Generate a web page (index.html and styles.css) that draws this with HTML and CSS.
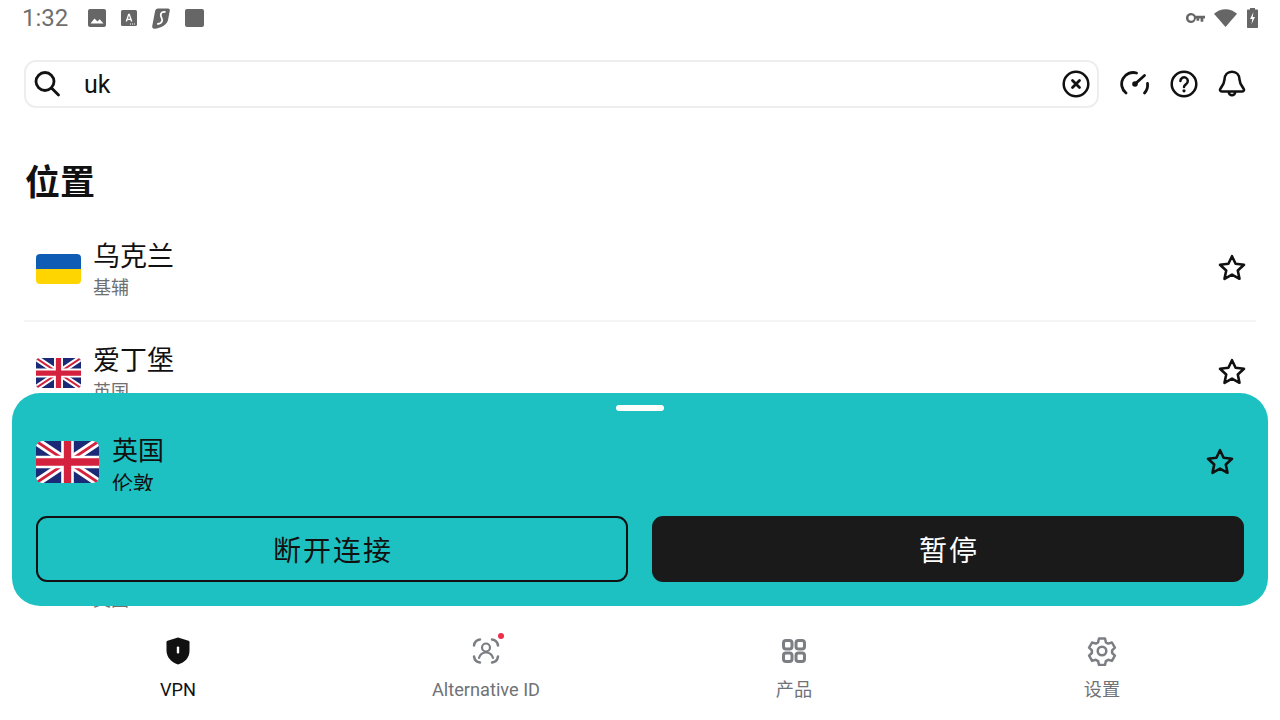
FILE: index.html
```html
<!DOCTYPE html>
<html lang="zh-CN">
<head>
    <meta charset="UTF-8">
    <meta name="viewport" content="width=device-width, initial-scale=1.0">
    <title>VPN</title>
    <link rel="stylesheet" href="styles.css">
</head>
<body>
    <!-- shared icons -->
    <svg class="defs" aria-hidden="true">
        <symbol id="star" viewBox="0 0 30 30">
            <path d="M15 3.200l3.600 7.600 8.400 1-6.200 5.700 1.700 8.300-7.500-4.200-7.500 4.200 1.700-8.300L3 11.800l8.400-1z" fill="none" stroke="currentColor" stroke-width="2.600" stroke-linejoin="round"/>
        </symbol>
        <symbol id="uk" viewBox="0 0 60 40" preserveAspectRatio="none">
            <rect width="60" height="40" fill="#1a2a76"/>
            <path d="M0 0L60 40M60 0L0 40" stroke="#fff" stroke-width="8"/>
            <path d="M0 0L60 40M60 0L0 40" stroke="#d4213d" stroke-width="2.600"/>
            <path d="M30 0V40M0 20H60" stroke="#fff" stroke-width="12"/>
            <path d="M30 0V40M0 20H60" stroke="#d4213d" stroke-width="7"/>
        </symbol>
    </svg>

    <div class="screen">
        <div class="status-bar">
            <span class="time">1:32</span>
            <div class="status-icons">
                <svg width="18" height="18" viewBox="0 0 18 18"><rect width="18" height="18" rx="2" fill="#666"/><path d="M2.500 14.500l4-5 3 3 2.200-2.200 3.800 4.200z" fill="#fff"/></svg>
                <svg width="16" height="16" viewBox="0 0 16 16"><rect width="16" height="16" rx="1.500" fill="#666"/><path d="M4.600 11.500L7.200 3.800h1.600l2.600 7.700H9.900l-.5-1.600H6.600l-.5 1.600zM7 8.700h2L8 5.600z" fill="#fff"/><path d="M9 14h1M11 14h1M13 14h1" stroke="#fff"/></svg>
                <svg width="18" height="21" viewBox="0 0 18 21"><path d="M6 .5h10c1.500 0 2 1 1.800 2L16 12c-1 5-7 8-13.500 8.800-1.500.2-2.500-1-2.300-2.500L3 3.500C3.300 1.700 4.500.5 6 .5z" fill="#666"/><path d="M13.500 4C10 3.500 8.500 5 8.800 7.500s2 3.500 1.300 5.500-2.500 3-5 2.800" fill="none" stroke="#fff" stroke-width="1.800"/></svg>
                <span class="st-square"></span>
            </div>
            <div class="status-right">
                <svg class="st-key" width="19" height="12" viewBox="0 0 19 12"><path d="M5.200 1a5 5 0 0 1 4.500 2.800h9.300v2.800h-1.700v3.200h-2.700V6.600h-1.400v2.200H10.500V6.600H9.900A5 5 0 1 1 5.200 1zm0 2.300a2.700 2.700 0 1 0 0 5.400 2.700 2.700 0 0 0 0-5.400z" fill="#666"/></svg>
                <svg width="23" height="18" viewBox="0 0 23 18"><path d="M0 4.800C3 2 7 .2 11.500.2S20 2 23 4.800L11.500 18z" fill="#666"/></svg>
                <svg width="11" height="20" viewBox="0 0 11 20"><path d="M3 0h5v1.500h2c.6 0 1 .4 1 1V19c0 .6-.4 1-1 1H1c-.6 0-1-.4-1-1V2.500c0-.6.4-1 1-1h2z" fill="#666"/><path d="M6.500 4L3 11h2.300l-.8 5L8 9H5.700z" fill="#fff"/></svg>
            </div>
        </div>

        <div class="search-row">
            <div class="search-box">
                <svg width="30" height="30" viewBox="0 0 30 30" fill="none" stroke="#111" stroke-width="2.800" stroke-linecap="round"><circle cx="13" cy="12.500" r="9"/><path d="M20 19.500l6.500 6.500"/></svg>
                <span class="search-text">uk</span>
                <svg class="search-clear" width="28" height="28" viewBox="0 0 28 28" fill="none" stroke="#111" stroke-width="2.500" stroke-linecap="round"><circle cx="14" cy="14" r="12.300"/><path d="M10.500 10.500l7 7M17.500 10.500l-7 7" stroke-width="2.800"/></svg>
            </div>
            <div class="search-actions">
                <svg width="30" height="30" viewBox="0 0 30 30" fill="none" stroke="#111" stroke-width="2.800" stroke-linecap="round"><path d="M6 24A11.500 11.500 0 0 1 16.500 4"/><path d="M27.500 14.500a11.500 11.500 0 0 1-3 9.500"/><path d="M15 15L24.500 6.500"/><circle cx="15" cy="15" r="2.800" fill="#111" stroke="none"/></svg>
                <svg width="28" height="28" viewBox="0 0 28 28" fill="none" stroke="#111" stroke-width="2.500" stroke-linecap="round"><circle cx="14" cy="14" r="12.300"/><path d="M10.400 11a3.700 3.700 0 1 1 5.700 3.100c-1.300.9-2.100 1.600-2.100 3"/><circle cx="14" cy="20.800" r="1.600" fill="#111" stroke="none"/></svg>
                <svg width="28" height="28" viewBox="0 0 28 28" fill="none" stroke="#111" stroke-width="2.600" stroke-linejoin="round"><path d="M14 1.800c-4.500 0-7.300 3.300-7.500 7.700-.2 4.500-2 6.500-4 9-1 1.300-.4 3 1.300 3h20.400c1.700 0 2.300-1.700 1.300-3-2-2.500-3.800-4.500-4-9-.2-4.400-3-7.700-7.500-7.700z"/><path d="M10.800 22a3.200 3.200 0 0 0 6.400 0"/></svg>
            </div>
        </div>

        <h1 class="section-title">位置</h1>

        <div class="location-list">
            <div class="location">
                <svg class="flag" viewBox="0 0 45 30"><rect width="45" height="15" fill="#0f5cb5"/><rect y="15" width="45" height="15" fill="#fed500"/></svg>
                <div class="location-info">
                    <div class="location-name">乌克兰</div>
                    <div class="location-sub">基辅</div>
                </div>
                <svg class="star"><use href="#star"/></svg>
            </div>
            <div class="location">
                <svg class="flag"><use href="#uk"/></svg>
                <div class="location-info">
                    <div class="location-name">爱丁堡</div>
                    <div class="location-sub">英国</div>
                </div>
                <svg class="star"><use href="#star"/></svg>
            </div>
            <div class="location">
                <svg class="flag"><use href="#uk"/></svg>
                <div class="location-info">
                    <div class="location-name">格拉斯哥</div>
                    <div class="location-sub">英国</div>
                </div>
                <svg class="star"><use href="#star"/></svg>
            </div>
            <div class="location">
                <svg class="flag"><use href="#uk"/></svg>
                <div class="location-info">
                    <div class="location-name">伦敦</div>
                    <div class="location-sub">英国</div>
                </div>
                <svg class="star"><use href="#star"/></svg>
            </div>
        </div>

        <nav class="bottom-nav">
            <div class="nav-item active">
                <svg width="28" height="30" viewBox="0 0 28 30"><path d="M14 1.500l10.500 3.300c.6.200 1 .7 1 1.400v8.800c0 6.500-4.500 11.500-11.500 13.500C7 26 2.500 21 2.500 14.500V6.200c0-.7.400-1.200 1-1.400z" fill="#111"/><rect x="12.800" y="10.500" width="2.400" height="7" rx="1" fill="#fff"/></svg>
                <span class="nav-label">VPN</span>
            </div>
            <div class="nav-item">
                <span class="nav-icon">
                    <svg width="30" height="30" viewBox="0 0 30 30" fill="none" stroke="#7b7f84" stroke-width="2.500" stroke-linecap="round"><path d="M9 3.500C5.500 4 3.500 6 3 9.500M21 3.500c3.500.5 5.500 2.500 6 6M3 20.500c.5 3.500 2.500 5.500 6 6M27 20.500c-.5 3.500-2.500 5.500-6 6"/><circle cx="15" cy="11.500" r="4" stroke-width="2.200"/><path d="M8 22c1-3.500 3.500-5.500 7-5.500s6 2 7 5.500" stroke-width="2.200"/></svg>
                    <span class="nav-dot"></span>
                </span>
                <span class="nav-label">Alternative ID</span>
            </div>
            <div class="nav-item">
                <svg width="30" height="30" viewBox="0 0 30 30" fill="none" stroke="#7b7f84" stroke-width="3"><rect x="4.500" y="4.500" width="8.500" height="8.500" rx="2.500"/><rect x="17" y="4.500" width="8.500" height="8.500" rx="2.500"/><rect x="4.500" y="17" width="8.500" height="8.500" rx="2.500"/><rect x="17" y="17" width="8.500" height="8.500" rx="2.500"/></svg>
                <span class="nav-label">产品</span>
            </div>
            <div class="nav-item">
                <svg width="30" height="30" viewBox="0 0 30 30" fill="none" stroke="#7b7f84" stroke-width="2.500" stroke-linejoin="round"><path d="M12 2.500h6l.9 3.800 2.300 1.300 3.700-1.100 3 5.200-2.800 2.700v2.600l2.800 2.700-3 5.200-3.700-1.100-2.300 1.300-.9 3.800h-6l-.9-3.800-2.300-1.300-3.700 1.100-3-5.200 2.800-2.700v-2.600L2.100 11.700l3-5.200 3.700 1.100 2.300-1.300z"/><circle cx="15" cy="15" r="4.300"/></svg>
                <span class="nav-label">设置</span>
            </div>
        </nav>

        <!-- connected sheet sits over the list -->
        <div class="sheet">
            <div class="sheet-handle"></div>
            <div class="sheet-head">
                <svg class="sheet-flag"><use href="#uk"/></svg>
                <div class="sheet-info">
                    <div class="sheet-name">英国</div>
                    <div class="sheet-sub">伦敦</div>
                </div>
                <svg class="star"><use href="#star"/></svg>
            </div>
            <div class="sheet-buttons">
                <button class="btn btn-outline">断开连接</button>
                <button class="btn btn-dark">暂停</button>
            </div>
        </div>
    </div>
</body>
</html>
```

FILE: styles.css
```css
body {
    margin: 0;
    background-color: #fff;
    color: #111;
    font-family: Roboto, "Noto Sans CJK SC", sans-serif;
}

.defs {
    display: none;
}

.screen {
    position: relative;
    display: flex;
    flex-direction: column;
    width: 1280px;
    height: 720px;
    overflow: hidden;
    background-color: #fff;
}

/* status bar */
.status-bar {
    display: flex;
    align-items: center;
    flex-shrink: 0;
    height: 36px;
    padding: 0 22px;
}

.time {
    width: 66px;
    font-size: 24px;
    color: #6f6f6f;
}

.status-icons {
    display: flex;
    align-items: center;
    gap: 15px;
}

.st-square {
    width: 19px;
    height: 18px;
    border-radius: 2px;
    background-color: #666;
}

.status-right {
    display: flex;
    align-items: center;
    gap: 10px;
    margin-left: auto;
}

.st-key {
    margin-right: -1px;
}

/* search */
.search-row {
    display: flex;
    align-items: center;
    flex-shrink: 0;
    height: 48px;
    margin-top: 24px;
    padding: 0 34px 0 24px;
}

.search-box {
    display: flex;
    align-items: center;
    box-sizing: border-box;
    width: 1076px;
    height: 48px;
    padding: 0 7px 0 6px;
    border: 2px solid #eeeeee;
    border-radius: 12px;
}

.search-text {
    margin-left: 22px;
    font-size: 25px;
}

.search-clear {
    margin-left: auto;
}

.search-actions {
    display: flex;
    align-items: center;
    gap: 20px;
    margin-left: 21px;
}

.section-title {
    flex-shrink: 0;
    margin: 52px 0 0 25px;
    font-size: 35px;
    line-height: 48px;
    font-weight: 700;
}

/* locations */
.location-list {
    flex: 1;
    min-height: 0;
    margin-top: 10px;
    padding: 0 24px;
    overflow: hidden;
}

.location {
    display: flex;
    align-items: center;
    box-sizing: border-box;
    height: 104px;
    padding: 0 9px 0 12px;
    border-bottom: 2px solid #f4f4f4;
}

.flag {
    flex-shrink: 0;
    width: 45px;
    height: 30px;
    border-radius: 4px;
}

.location-info {
    flex: 1;
    margin-left: 12px;
}

.location-name {
    font-size: 27px;
    line-height: 36px;
}

.location-sub {
    margin-top: 1px;
    font-size: 18px;
    line-height: 24px;
    color: #6f6f6f;
}

.star {
    flex-shrink: 0;
    width: 30px;
    height: 30px;
}

.location .star {
    margin-bottom: 2px;
}

/* bottom nav */
.bottom-nav {
    display: grid;
    grid-template-columns: repeat(4, 1fr);
    flex-shrink: 0;
    height: 110px;
    padding: 0 24px;
    background-color: #fff;
}

.nav-item {
    display: flex;
    flex-direction: column;
    align-items: center;
    padding-top: 26px;
    font-size: 18.2px;
    line-height: 24px;
    color: #6f7276;
}

.nav-label {
    margin-top: 12px;
}

.nav-item.active {
    color: #111;
}

.nav-icon {
    position: relative;
    display: block;
    height: 30px;
}

.nav-dot {
    position: absolute;
    top: -3px;
    right: -3px;
    width: 6px;
    height: 6px;
    border-radius: 50%;
    background-color: #ec2f4b;
}

/* connected sheet */
.sheet {
    position: absolute;
    left: 12px;
    top: 393px;
    box-sizing: border-box;
    width: 1256px;
    height: 213px;
    padding: 12px 24px 0;
    border-radius: 28px;
    background-color: #1ec1c1;
}

.sheet-handle {
    width: 48px;
    height: 6px;
    margin: 0 auto;
    border-radius: 3px;
    background-color: #fff;
}

.sheet-head {
    display: flex;
    align-items: center;
    height: 71px;
    margin-top: 15px;
    padding-right: 9px;
}

.sheet-flag {
    flex-shrink: 0;
    width: 63px;
    height: 42px;
    border-radius: 6px;
}

.sheet-info {
    flex: 1;
    margin-top: 4px;
    margin-left: 13px;
}

.sheet-name {
    font-size: 26px;
    line-height: 36px;
}

/* the name below the title is cut off by its box */
.sheet-sub {
    height: 22px;
    margin-bottom: 3px;
    overflow: hidden;
    font-size: 21px;
    line-height: 31px;
}

.sheet-buttons {
    display: flex;
    gap: 24px;
    margin-top: 19px;
}

.btn {
    flex: 1;
    height: 66px;
    padding: 0 0 0 2px;
    border: 2px solid #111;
    border-radius: 11px;
    font-family: inherit;
    font-size: 28px;
    letter-spacing: 2px;
}

.btn-outline {
    background: none;
    color: #111;
}

.btn-dark {
    border-color: #1a1a1a;
    background-color: #1a1a1a;
    color: #fff;
}
```
